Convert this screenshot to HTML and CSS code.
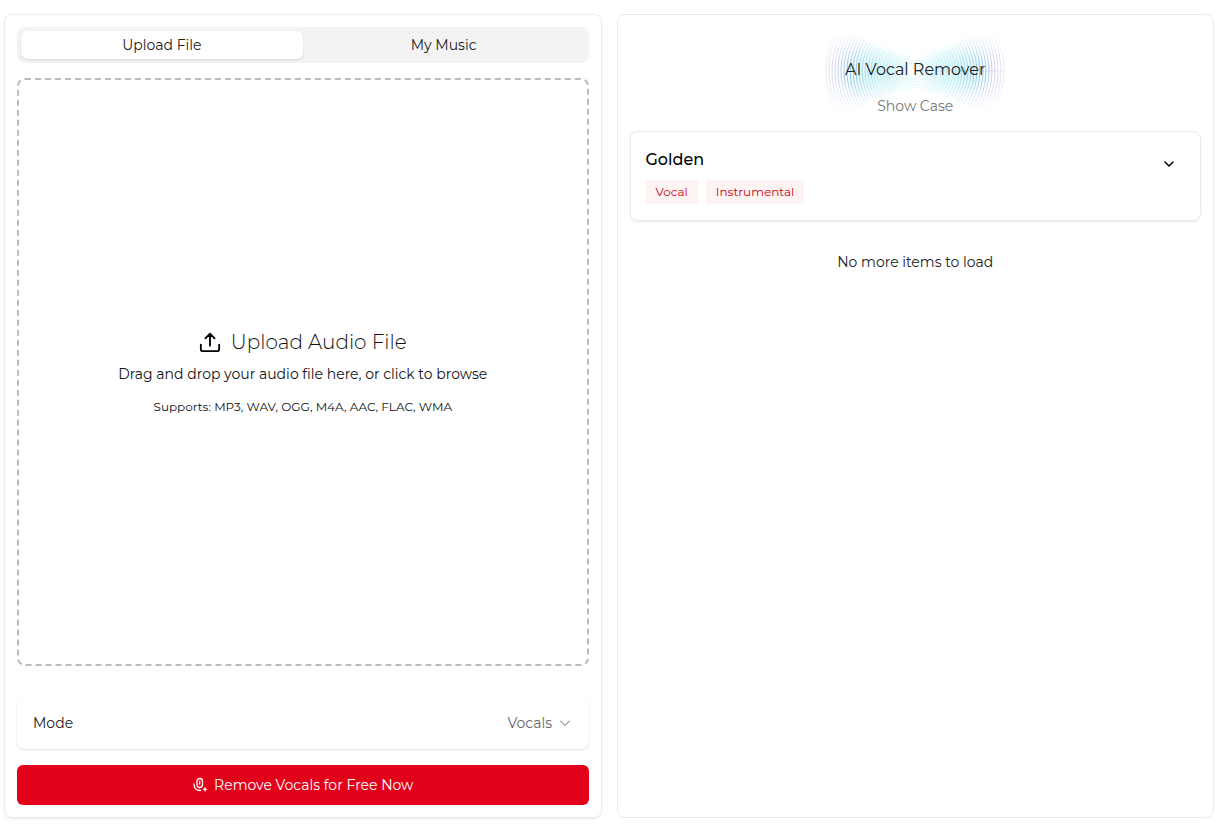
FILE: index.html
```html
<!DOCTYPE html>
<html lang="en">
<head>
  <meta charset="UTF-8" />
  <meta name="viewport" content="width=device-width, initial-scale=1.0"/>
  <title>AI Vocal Remover</title>
  <link rel="stylesheet" href="styles.css">
</head>

<body>
  <main class="layout">
    <section class="panel tool">
      <div class="tabs" role="tablist">
        <button class="tab active" type="button" role="tab" aria-selected="true">Upload File</button>
        <button class="tab" type="button" role="tab" aria-selected="false">My Music</button>
      </div>

      <button class="dropzone" type="button">
        <span class="drop-title">
          <svg class="upload-icon" viewBox="0 0 24 24" aria-hidden="true">
            <path d="M12 16V3M7 8l5-5 5 5M2 15v4.500a2.500 2.500 0 0 0 2.500 2.500h15a2.500 2.500 0 0 0 2.500-2.500V15"/>
          </svg>
          Upload Audio File
        </span>
        <span class="drop-text">Drag and drop your audio file here, or click to browse</span>
        <span class="drop-formats">Supports: MP3, WAV, OGG, M4A, AAC, FLAC, WMA</span>
      </button>

      <div class="mode">
        <label for="mode">Mode</label>
        <div class="mode-select">
          <select id="mode">
            <option>Vocals</option>
          </select>
          <svg class="select-arrow" viewBox="0 0 12 12" aria-hidden="true"><path d="M1.500 4L6 8.500 10.500 4"/></svg>
        </div>
      </div>

      <button class="submit" type="button">
        <svg class="mic-icon" viewBox="0 0 16 16" aria-hidden="true">
          <rect x="5" y="1.500" width="5.500" height="9" rx="2.700"/>
          <path d="M7.700 4v3M2 7c0 4 2.300 6.500 6.500 6.500"/>
          <path class="spark" d="M13 9.500l.8 1.900 1.900.8-1.900.8-.8 1.900-.8-1.900-1.900-.8 1.900-.8z"/>
        </svg>
        Remove Vocals for Free Now
      </button>
    </section>

    <section class="panel showcase">
      <header class="hero">
        <svg class="waves" viewBox="0 0 184 80" aria-hidden="true">
          <defs>
            <radialGradient id="tint" gradientUnits="userSpaceOnUse" cx="92" cy="40" r="92">
              <stop offset="0" stop-color="#9aeaf0" stop-opacity=".3"/>
              <stop offset=".4" stop-color="#7fdde8" stop-opacity=".45"/>
              <stop offset=".7" stop-color="#4a9fdc" stop-opacity=".7"/>
              <stop offset=".85" stop-color="#8a8fd8" stop-opacity=".5"/>
              <stop offset="1" stop-color="#b9aee6" stop-opacity=".25"/>
            </radialGradient>
            <radialGradient id="glow">
              <stop offset="0" stop-color="#9beaf2" stop-opacity=".4"/>
              <stop offset="1" stop-color="#9beaf2" stop-opacity="0"/>
            </radialGradient>
            <linearGradient id="fade" x1="0" y1="0" x2="0" y2="1">
              <stop offset="0" stop-color="#000"/>
              <stop offset=".4" stop-color="#ddd"/>
              <stop offset=".6" stop-color="#ddd"/>
              <stop offset="1" stop-color="#000"/>
            </linearGradient>
            <mask id="bowtie">
              <path fill="url(#fade)" d="M0 0H32Q62 26 92 28Q122 26 152 0H184V80H152Q122 60 92 58Q62 60 32 80H0z"/>
            </mask>
          </defs>
          <ellipse cx="54" cy="40" rx="42" ry="28" fill="url(#glow)" stroke="none"/>
          <ellipse cx="130" cy="40" rx="42" ry="28" fill="url(#glow)" stroke="none"/>
          <g id="rings" mask="url(#bowtie)"></g>
        </svg>
        <h1>AI Vocal Remover</h1>
        <p>Show Case</p>
      </header>

      <article class="track">
        <div class="track-info">
          <h2>Golden</h2>
          <div class="tags">
            <span class="tag">Vocal</span>
            <span class="tag">Instrumental</span>
          </div>
        </div>
        <button class="expand" type="button" aria-label="Expand Golden">
          <svg viewBox="0 0 12 12" aria-hidden="true"><path d="M2 4l4 4 4-4"/></svg>
        </button>
      </article>

      <p class="end">No more items to load</p>
    </section>
  </main>

  <script src="script.js"></script>
</body>
</html>
```

FILE: styles.css
```css
:root {
  --line: #ebebeb;
  --red: #e2001a;
  --txt: #222;
  --muted: #777;
}

* { box-sizing: border-box; }

body {
  margin: 0;
  background: #fff;
  color: var(--txt);
  font-family: Montserrat, Inter, sans-serif;
  font-size: 14px;
  line-height: 20px;
}

h1, h2, p { margin: 0; }

button, select {
  font: inherit;
  color: inherit;
}

button { cursor: pointer; }

svg {
  fill: none;
  stroke: currentColor;
  stroke-linecap: round;
  stroke-linejoin: round;
}

.layout {
  display: grid;
  grid-template-columns: 1fr 1fr;
  gap: 15px;
  min-height: 100vh;
  padding: 14px 12px 8px 4px;
}

.panel {
  border: 1px solid var(--line);
  border-radius: 8px;
  padding: 12px;
}

.tool {
  display: flex;
  flex-direction: column;
  box-shadow: 0 1px 2px rgba(0, 0, 0, .08);
}

.tabs {
  display: grid;
  grid-template-columns: 1fr 1fr;
  padding: 4px;
  border-radius: 8px;
  background: #f3f3f3;
}

.tab {
  border: 0;
  border-radius: 7px;
  padding: 4px;
  background: none;
}

.tab.active {
  background: #fff;
  box-shadow: 0 1px 2px rgba(0, 0, 0, .12);
}

.dropzone {
  flex: 1;
  display: flex;
  flex-direction: column;
  align-items: center;
  justify-content: center;
  margin-top: 15px;
  border: 2px dashed #bbb;
  border-radius: 8px;
  background: none;
  color: #111;
}

.drop-title {
  display: flex;
  align-items: center;
  gap: 10px;
  font-size: 20px;
  font-weight: 300;
  line-height: 28px;
}

.upload-icon {
  width: 22px;
  height: 22px;
  stroke: #000;
  stroke-width: 2;
}

.drop-text { margin-top: 8px; }

.drop-formats {
  margin-top: 13px;
  font-size: 12px;
}

.mode {
  display: flex;
  align-items: center;
  justify-content: space-between;
  margin: 31px 0 16px;
  padding: 16px;
  border-radius: 8px;
  box-shadow: 0 1px 2px rgba(0, 0, 0, .14);
}

.mode-select {
  display: flex;
  align-items: center;
  gap: 6px;
  padding-right: 2px;
  color: #666;
}

.mode select {
  appearance: none;
  border: 0;
  padding: 0;
  background: none;
}

.select-arrow {
  width: 12px;
  height: 12px;
}

.submit {
  display: flex;
  align-items: center;
  justify-content: center;
  gap: 6px;
  border: 0;
  border-radius: 6px;
  padding: 10px;
  background: var(--red);
  color: #fff;
}

.mic-icon {
  width: 16px;
  height: 16px;
  stroke-width: 1.3;
}

.spark {
  fill: currentColor;
  stroke: none;
}

.hero {
  position: relative;
  padding: 31px 0 15px;
  text-align: center;
}

.waves {
  position: absolute;
  top: 4px;
  left: 50%;
  width: 184px;
  height: 80px;
  transform: translateX(-50%);
}

.hero h1 {
  position: relative;
  font-size: 16px;
  font-weight: 400;
  line-height: 24px;
}

.hero p {
  position: relative;
  margin-top: 14px;
  color: var(--muted);
}

.track {
  display: flex;
  justify-content: space-between;
  padding: 16px 15px;
  border: 1px solid var(--line);
  border-radius: 8px;
  box-shadow: 0 1px 2px rgba(0, 0, 0, .1);
}

.track h2 {
  color: #000;
  font-size: 16px;
  font-weight: 500;
  line-height: 24px;
}

.tags {
  display: flex;
  gap: 8px;
  margin-top: 8px;
}

.tag {
  padding: 2px 10px;
  border-radius: 4px;
  background: #fef3f3;
  color: #cc0018;
  font-size: 12px;
}

.expand {
  align-self: flex-start;
  border: 0;
  padding: 10px;
  background: none;
}

.expand svg {
  display: block;
  width: 12px;
  height: 12px;
  stroke: #000;
  stroke-width: 1.5;
}

.end {
  margin-top: 31px;
  text-align: center;
}
```

FILE: script.js
```javascript
const rings = document.getElementById("rings");

for (let r = 8; r < 92; r += 3) {
  const ring = document.createElementNS("http://www.w3.org/2000/svg", "circle");
  ring.setAttribute("cx", 92);
  ring.setAttribute("cy", 40);
  ring.setAttribute("r", r);
  ring.setAttribute("stroke", "url(#tint)");
  rings.appendChild(ring);
}
```
